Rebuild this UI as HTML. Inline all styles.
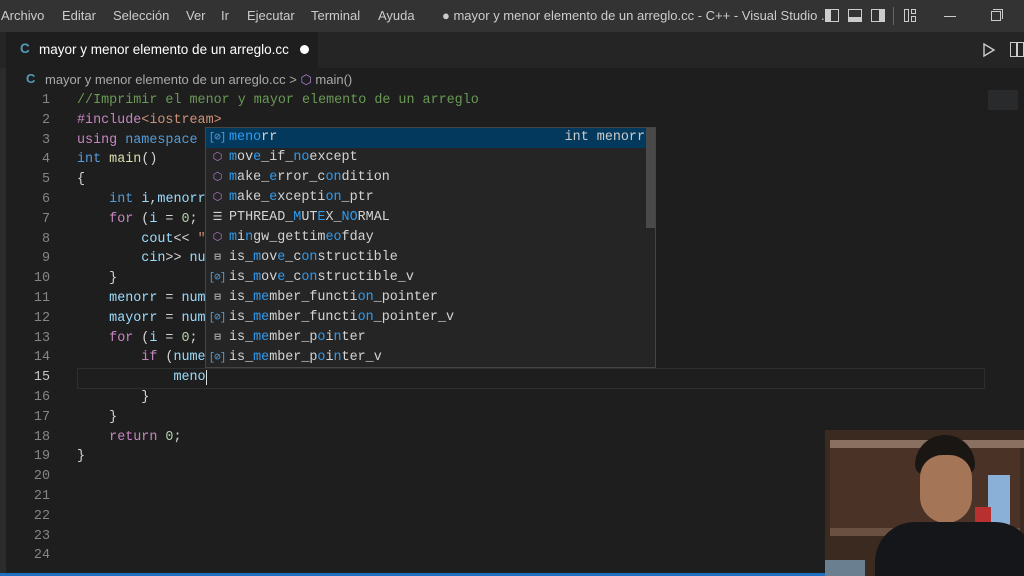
<!DOCTYPE html>
<html><head><meta charset="utf-8"><style>
*{margin:0;padding:0;box-sizing:border-box}
body{width:1024px;height:576px;overflow:hidden;background:#1e1e1e;font-family:"Liberation Sans",sans-serif;position:relative;color:#ccc}
.abs{position:absolute}
#title{left:0;top:0;width:1024px;height:32px;background:#333;font-size:13px;color:#ccc}
#title span{position:absolute;top:8px}
#tabs{left:0;top:32px;width:1024px;height:36px;background:#252526}
#tab{left:6px;top:32px;width:312px;height:36px;background:#1e1e1e;font-size:13.5px;color:#fff}
#crumb{left:0;top:68px;width:1024px;height:22px;font-size:13px;color:#aaa}
.code{font-family:"Liberation Mono",monospace;font-size:13.4px;white-space:pre;line-height:19.8px}
#nums{left:0;top:91px;width:50px;text-align:right;color:#858585}
#src{left:77px;top:91px;color:#d4d4d4}
.c{color:#6a9955}.k{color:#569cd6}.p{color:#c586c0}.s{color:#ce9178}.f{color:#dcdcaa}.v{color:#9cdcfe}.n{color:#b5cea8}
#sug{left:205px;top:127px;width:451px;height:241px;background:#252526;border:1px solid #454545;white-space:normal;overflow:hidden}
.row{height:20px;line-height:20px;position:relative;color:#d4d4d4;white-space:pre}
.row .t{position:absolute;left:23px;top:0}
.row .ic{position:absolute;left:2px;top:0;width:18px;height:20px;font-size:11px;line-height:20px;text-align:center;letter-spacing:-1px}
.h{color:#2f9cf0}
.sel{background:#04395e}
</style></head><body>
<div class="abs" style="left:0;top:32px;width:6px;height:544px;background:#2b2b2b"></div>
<div id="title" class="abs">
<span style="left:1px">Archivo</span><span style="left:62px">Editar</span><span style="left:113px">Selección</span><span style="left:186px">Ver</span><span style="left:221px">Ir</span><span style="left:247px">Ejecutar</span><span style="left:311px">Terminal</span><span style="left:378px">Ayuda</span>
<span style="left:442px">● mayor y menor elemento de un arreglo.cc - C++ - Visual Studio ...</span>
<div class="abs" style="left:825px;top:9px;width:14px;height:13px;border:1.5px solid #ccc;border-left:6px solid #ccc"></div>
<div class="abs" style="left:848px;top:9px;width:14px;height:13px;border:1.5px solid #ccc;border-bottom:5px solid #ccc"></div>
<div class="abs" style="left:871px;top:9px;width:14px;height:13px;border:1.5px solid #ccc;border-right:6px solid #ccc"></div>
<div class="abs" style="left:893px;top:7px;width:1px;height:18px;background:#666"></div>
<div class="abs" style="left:904px;top:9px;width:5px;height:13px;border:1.5px solid #ccc"></div>
<div class="abs" style="left:911px;top:9px;width:5px;height:5px;border:1.5px solid #ccc"></div>
<div class="abs" style="left:911px;top:16px;width:5px;height:6px;border:1.5px solid #ccc"></div>
<div class="abs" style="left:944px;top:16px;width:12px;height:1px;background:#ccc"></div>
<div class="abs" style="left:991px;top:11px;width:10px;height:10px;border:1.2px solid #ccc"></div>
<div class="abs" style="left:993px;top:9px;width:10px;height:10px;border-top:1.2px solid #ccc;border-right:1.2px solid #ccc"></div>
</div>
<div id="tabs" class="abs"></div>
<div id="tab" class="abs"><span class="abs" style="left:14px;top:9px;color:#519aba;font-weight:bold">C</span><span class="abs" style="left:33px;top:10px">mayor y menor elemento de un arreglo.cc</span><span class="abs" style="left:294px;top:13px;width:9px;height:9px;border-radius:50%;background:#fff"></span></div>
<svg class="abs" style="left:982px;top:42px" width="14" height="16"><path d="M2 2 L12 8 L2 14 Z" fill="none" stroke="#ccc" stroke-width="1.4"/></svg>
<div class="abs" style="left:1010px;top:42px;width:14px;height:15px;border:1.5px solid #ccc"></div>
<div class="abs" style="left:1016px;top:42px;width:1.5px;height:15px;background:#ccc"></div>
<div id="crumb" class="abs"><span class="abs" style="left:26px;top:3px;color:#519aba;font-weight:bold">C</span><span class="abs" style="left:45px;top:4px">mayor y menor elemento de un arreglo.cc &gt; <span style="color:#b180d7">⬡</span> main()</span></div>
<div class="abs" style="left:77px;top:368px;width:908px;height:21px;border:1px solid #2e2e2e"></div>
<div id="nums" class="abs code">1
2
3
4
5
6
7
8
9
10
11
12
13
14
<span style="color:#c6c6c6">15</span>
16
17
18
19
20
21
22
23
24</div>
<div id="src" class="abs code"><span class="c">//Imprimir el menor y mayor elemento de un arreglo</span>
<span class="p">#include</span><span class="s">&lt;iostream&gt;</span>
<span class="p">using</span> <span class="k">namespace</span>
<span class="k">int</span> <span class="f">main</span>()
{
    <span class="k">int</span> <span class="v">i</span>,<span class="v">menorr</span>
    <span class="p">for</span> (<span class="v">i</span> = <span class="n">0</span>;
        <span class="v">cout</span>&lt;&lt; <span class="s">"</span>
        <span class="v">cin</span>&gt;&gt; <span class="v">nu</span>
    }
    <span class="v">menorr</span> = <span class="v">num</span>
    <span class="v">mayorr</span> = <span class="v">num</span>
    <span class="p">for</span> (<span class="v">i</span> = <span class="n">0</span>;
        <span class="p">if</span> (<span class="v">nume</span>
            <span class="v">meno</span><span style="border-left:1.5px solid #ddd"></span>
        }
    }
    <span class="p">return</span> <span class="n">0</span>;
}</div>
<div id="sug" class="abs code"><div class="row sel"><span class="ic k">[⊘]</span><span class="t"><span class="h">meno</span>rr</span><span style="position:absolute;right:10px;color:#ccc">int menorr</span></div><div class="row"><span class="ic" style="color:#b180d7">⬡</span><span class="t"><span class="h">m</span>ov<span class="h">e</span>_if_<span class="h">no</span>except</span></div><div class="row"><span class="ic" style="color:#b180d7">⬡</span><span class="t"><span class="h">m</span>ake_<span class="h">e</span>rror_c<span class="h">on</span>dition</span></div><div class="row"><span class="ic" style="color:#b180d7">⬡</span><span class="t"><span class="h">m</span>ake_<span class="h">e</span>xcepti<span class="h">on</span>_ptr</span></div><div class="row"><span class="ic">☰</span><span class="t">PTHREAD_<span class="h">M</span>UT<span class="h">E</span>X_<span class="h">NO</span>RMAL</span></div><div class="row"><span class="ic" style="color:#b180d7">⬡</span><span class="t"><span class="h">m</span>i<span class="h">n</span>gw_gettim<span class="h">eo</span>fday</span></div><div class="row"><span class="ic">⊟</span><span class="t">is_<span class="h">m</span>ov<span class="h">e</span>_c<span class="h">on</span>structible</span></div><div class="row"><span class="ic k">[⊘]</span><span class="t">is_<span class="h">m</span>ov<span class="h">e</span>_c<span class="h">on</span>structible_v</span></div><div class="row"><span class="ic">⊟</span><span class="t">is_<span class="h">me</span>mber_functi<span class="h">on</span>_pointer</span></div><div class="row"><span class="ic k">[⊘]</span><span class="t">is_<span class="h">me</span>mber_functi<span class="h">on</span>_pointer_v</span></div><div class="row"><span class="ic">⊟</span><span class="t">is_<span class="h">me</span>mber_p<span class="h">o</span>i<span class="h">n</span>ter</span></div><div class="row"><span class="ic k">[⊘]</span><span class="t">is_<span class="h">me</span>mber_p<span class="h">o</span>i<span class="h">n</span>ter_v</span></div><div class="abs" style="left:440px;top:0;width:10px;height:100px;background:#4a4a4a"></div></div>
<div class="abs" style="left:988px;top:90px;width:30px;height:20px;background:#2a2d30;opacity:.8"></div>
<div class="abs" style="left:825px;top:430px;width:199px;height:146px;background:#3a2a20;overflow:hidden">
<div class="abs" style="left:5px;top:10px;width:194px;height:8px;background:#8a7060"></div>
<div class="abs" style="left:5px;top:18px;width:190px;height:80px;background:#4a3326"></div>
<div class="abs" style="left:5px;top:98px;width:190px;height:8px;background:#6a5040"></div>
<div class="abs" style="left:163px;top:45px;width:22px;height:50px;background:#8ab0d8"></div>
<div class="abs" style="left:150px;top:77px;width:16px;height:18px;background:#b83030"></div>
<div class="abs" style="left:90px;top:5px;width:60px;height:40px;border-radius:30px 30px 10px 10px;background:#1a1614"></div>
<div class="abs" style="left:95px;top:25px;width:52px;height:68px;border-radius:24px 24px 28px 28px;background:#a57558"></div>
<div class="abs" style="left:50px;top:92px;width:160px;height:70px;border-radius:40px 40px 0 0;background:#15161a"></div>
<div class="abs" style="left:0;top:130px;width:40px;height:16px;background:#6a8090"></div>
</div>
<div class="abs" style="left:0;top:573px;width:825px;height:3px;background:#1e6fbf"></div>
</body></html>
